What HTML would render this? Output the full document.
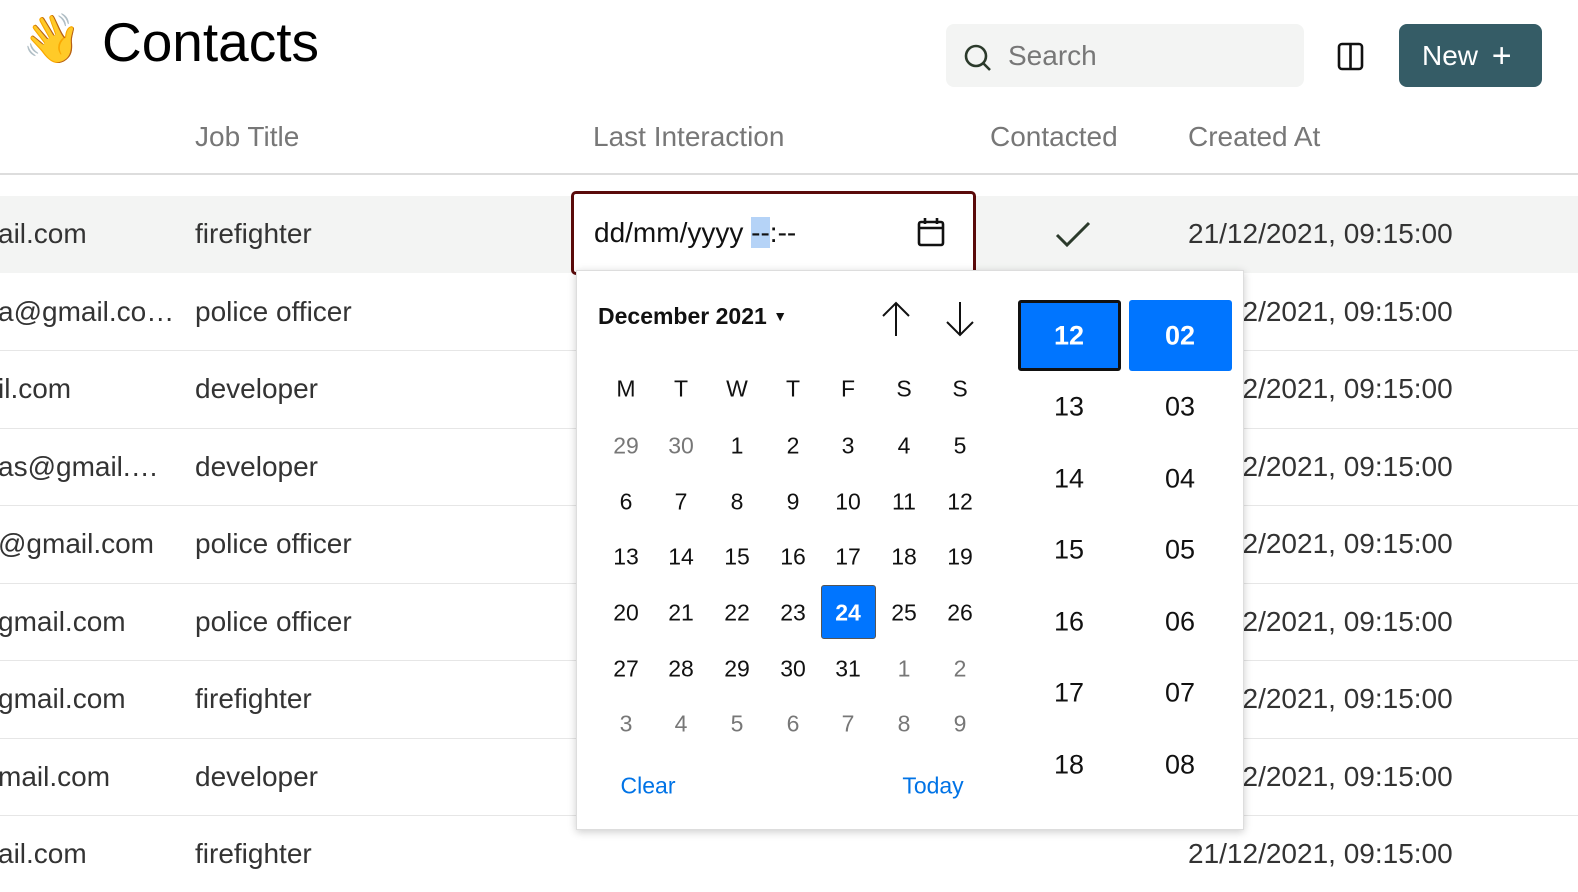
<!DOCTYPE html>
<html><head><meta charset="utf-8"><style>
*{margin:0;padding:0;box-sizing:border-box}
body{width:1578px;height:892px;overflow:hidden;background:#fff;font-family:"Liberation Sans",Arial,sans-serif;position:relative;color:#333}
.a{position:absolute;white-space:nowrap}
.t{font-size:28px;transform:translateY(-50%)}
.h{color:#777;font-size:28px;transform:translateY(-50%)}
.c{position:absolute;transform:translate(-50%,-50%);font-size:23px;color:#111}
.g{color:#777}
.tm{position:absolute;transform:translate(-50%,-50%);font-size:27px;color:#111}
</style></head><body>
<div class="a" style="left:22px;top:10px;font-size:48px;line-height:60px">👋</div>
<div class="a" style="left:102px;top:12px;font-size:55px;color:#000;line-height:60px">Contacts</div>
<div class="a" style="left:946px;top:24px;width:358px;height:63px;background:#f3f4f3;border-radius:8px"></div>
<svg class="a" style="left:962px;top:42px" width="32" height="32" viewBox="0 0 32 32"><circle cx="14" cy="14" r="10" fill="none" stroke="#2b3a2b" stroke-width="2.6"/><path d="M21 21l7 7" stroke="#2b3a2b" stroke-width="2.6"/></svg>
<div class="a" style="left:1008px;top:40px;font-size:28px;color:#777;line-height:32px">Search</div>
<svg class="a" style="left:1336px;top:41px" width="30" height="30" viewBox="0 0 30 30"><rect x="3" y="3" width="23" height="25" rx="3" fill="none" stroke="#111" stroke-width="2.6"/><path d="M14.5 3v25" stroke="#111" stroke-width="2.6"/></svg>
<div class="a" style="left:1399px;top:24px;width:143px;height:63px;background:#355c66;border-radius:8px;color:#fff;font-size:28px;line-height:63px;padding-left:23px">New <span style="font-size:34px;vertical-align:-2px;margin-left:6px">+</span></div>

<div class="a h" style="left:195px;top:137px">Job Title</div>
<div class="a h" style="left:593px;top:137px">Last Interaction</div>
<div class="a h" style="left:990px;top:137px">Contacted</div>
<div class="a h" style="left:1188px;top:137px">Created At</div>
<div class="a" style="left:0;top:173px;width:1578px;height:2px;background:#ddd"></div>
<div class="a" style="left:0;top:196px;width:1578px;height:77px;background:#f3f4f3"></div>
<div class="a" style="left:0;top:350px;width:1578px;height:1px;background:#e6e6e6"></div>
<div class="a" style="left:0;top:428px;width:1578px;height:1px;background:#e6e6e6"></div>
<div class="a" style="left:0;top:505px;width:1578px;height:1px;background:#e6e6e6"></div>
<div class="a" style="left:0;top:583px;width:1578px;height:1px;background:#e6e6e6"></div>
<div class="a" style="left:0;top:660px;width:1578px;height:1px;background:#e6e6e6"></div>
<div class="a" style="left:0;top:738px;width:1578px;height:1px;background:#e6e6e6"></div>
<div class="a" style="left:0;top:815px;width:1578px;height:1px;background:#e6e6e6"></div>

<div class="a t" style="left:-2px;top:234px">ail.com</div><div class="a t" style="left:195px;top:234px">firefighter</div>
<div class="a t" style="left:-2px;top:312px">a@gmail.co…</div><div class="a t" style="left:195px;top:312px">police officer</div>
<div class="a t" style="left:-2px;top:389px">il.com</div><div class="a t" style="left:195px;top:389px">developer</div>
<div class="a t" style="left:-2px;top:467px">as@gmail.…</div><div class="a t" style="left:195px;top:467px">developer</div>
<div class="a t" style="left:-2px;top:544px">@gmail.com</div><div class="a t" style="left:195px;top:544px">police officer</div>
<div class="a t" style="left:-2px;top:622px">gmail.com</div><div class="a t" style="left:195px;top:622px">police officer</div>
<div class="a t" style="left:-2px;top:699px">gmail.com</div><div class="a t" style="left:195px;top:699px">firefighter</div>
<div class="a t" style="left:-2px;top:777px">mail.com</div><div class="a t" style="left:195px;top:777px">developer</div>
<div class="a t" style="left:-2px;top:854px">ail.com</div><div class="a t" style="left:195px;top:854px">firefighter</div>

<div class="a t" style="left:1188px;top:234px">21/12/2021, 09:15:00</div>
<div class="a t" style="left:1188px;top:312px">21/12/2021, 09:15:00</div>
<div class="a t" style="left:1188px;top:389px">21/12/2021, 09:15:00</div>
<div class="a t" style="left:1188px;top:467px">21/12/2021, 09:15:00</div>
<div class="a t" style="left:1188px;top:544px">21/12/2021, 09:15:00</div>
<div class="a t" style="left:1188px;top:622px">21/12/2021, 09:15:00</div>
<div class="a t" style="left:1188px;top:699px">21/12/2021, 09:15:00</div>
<div class="a t" style="left:1188px;top:777px">21/12/2021, 09:15:00</div>
<div class="a t" style="left:1188px;top:854px">21/12/2021, 09:15:00</div>
<svg class="a" style="left:1055px;top:220px" width="36" height="30" viewBox="0 0 36 30"><path d="M2 15l10 10L34 3" fill="none" stroke="#2b3a2b" stroke-width="3"/></svg>

<div class="a" style="left:571px;top:191px;width:405px;height:84px;border:3px solid #5a0a0a;border-radius:5px;background:#fff"></div>
<div class="a" style="left:594px;top:216px;font-size:28px;color:#111;line-height:34px">dd/mm/yyyy <span style="background:#b5d3f7">--</span>:--</div>
<svg class="a" style="left:916px;top:216px" width="30" height="32" viewBox="0 0 30 32"><rect x="3" y="6" width="24" height="23" rx="2" fill="none" stroke="#111" stroke-width="2.6"/><path d="M3 12h24M9 2v6M21 2v6" stroke="#111" stroke-width="2.6"/></svg>

<div class="a" style="left:576px;top:270px;width:668px;height:560px;background:#fff;border:1px solid #ddd;box-shadow:0 2px 8px rgba(0,0,0,.2)"></div>
<div class="a" style="left:598px;top:302px;font-size:23px;font-weight:bold;color:#111;line-height:28px">December 2021 <span style="font-size:14px;vertical-align:3px">▼</span></div>
<svg class="a" style="left:880px;top:300px" width="32" height="38" viewBox="0 0 32 38"><path d="M16 36V3M3 16L16 3l13 13" fill="none" stroke="#111" stroke-width="2"/></svg>
<svg class="a" style="left:944px;top:300px" width="32" height="38" viewBox="0 0 32 38"><path d="M16 2v33M3 22l13 13 13-13" fill="none" stroke="#111" stroke-width="2"/></svg>

<div class="a" style="left:821px;top:585px;width:55px;height:54px;background:#0075ff;border:1px solid #555;border-radius:3px"></div>
<div class="a" style="left:1018px;top:300px;width:103px;height:71px;background:#0075ff;border:3px solid #111;border-radius:3px"></div>
<div class="a" style="left:1129px;top:300px;width:103px;height:71px;background:#0075ff;border-radius:3px"></div>

<div id="cal"></div>
<div class="c" style="left:648px;top:786px;color:#0073e6">Clear</div>
<div class="c" style="left:933px;top:786px;color:#0073e6">Today</div>
<script>
var xs=[626,681,737,793,848,904,960],ys=[389,446,502,557,613,669,724];
var rows=[["M","T","W","T","F","S","S"],["29","30","1","2","3","4","5"],["6","7","8","9","10","11","12"],["13","14","15","16","17","18","19"],["20","21","22","23","24","25","26"],["27","28","29","30","31","1","2"],["3","4","5","6","7","8","9"]];
var h="";
for(var r=0;r<7;r++)for(var c=0;c<7;c++){var g=(r==1&&c<2)||(r==5&&c>4)||r==6;var w=(r==4&&c==4);
h+='<div class="c'+(g?' g':'')+'" style="left:'+xs[c]+'px;top:'+ys[r]+'px;'+(w?'color:#fff;font-weight:bold;':'')+'">'+rows[r][c]+'</div>';}
var hy=[336,407,479,550,622,693,765];
for(var i=0;i<7;i++){var s=i==0?'color:#fff;font-weight:bold;':'';
h+='<div class="tm" style="left:1069px;top:'+hy[i]+'px;'+s+'">'+(12+i)+'</div>';
h+='<div class="tm" style="left:1180px;top:'+hy[i]+'px;'+s+'">0'+(2+i)+'</div>';}
document.getElementById("cal").innerHTML=h;
</script>
</body></html>
